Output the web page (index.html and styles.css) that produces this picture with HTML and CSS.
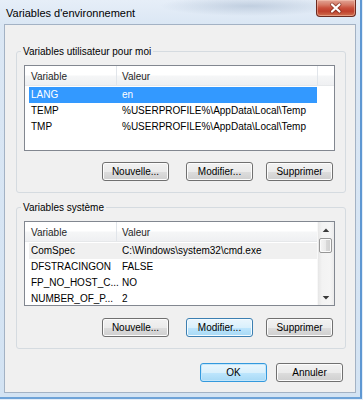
FILE: index.html
```html
<!DOCTYPE html>
<html lang="fr">
<head>
<meta charset="utf-8">
<title>Variables d'environnement</title>
<link rel="stylesheet" href="styles.css">
</head>
<body>
<div class="window">
  <header class="titlebar">
    <span class="title">Variables d'environnement</span>
    <span class="close">
      <svg width="38" height="15" viewBox="0 0 38 15">
        <path d="M15 3.5 L22.5 10.5 M22.5 3.5 L15 10.5" stroke="#6a2418" stroke-width="4" stroke-linecap="round" opacity="0.55"/>
        <path d="M15 3.5 L22.5 10.5 M22.5 3.5 L15 10.5" stroke="#ffffff" stroke-width="2.2" stroke-linecap="round"/>
      </svg>
    </span>
  </header>
  <main class="client">
    <fieldset class="group group-user">
      <legend>Variables utilisateur pour moi</legend>
      <div class="list list-user">
        <div class="list-main">
          <div class="lv-header">
            <div class="hcell hc1">Variable</div>
            <div class="hcell hc2 fixed">Valeur</div>
            <div class="hcell hc3"></div>
          </div>
          <div class="rows">
            <div class="row selected"><span class="c1">LANG</span><span class="c2">en</span></div>
            <div class="row"><span class="c1">TEMP</span><span class="c2">%USERPROFILE%\AppData\Local\Temp</span></div>
            <div class="row"><span class="c1">TMP</span><span class="c2">%USERPROFILE%\AppData\Local\Temp</span></div>
          </div>
        </div>
      </div>
      <div class="btn-row">
        <button class="btn btn-new">Nouvelle...</button>
        <button class="btn btn-edit">Modifier...</button>
        <button class="btn">Supprimer</button>
      </div>
    </fieldset>

    <fieldset class="group group-system">
      <legend>Variables système</legend>
      <div class="list list-system">
        <div class="list-main">
          <div class="lv-header">
            <div class="hcell hc1">Variable</div>
            <div class="hcell hc2">Valeur</div>
          </div>
          <div class="rows">
            <div class="row inactive"><span class="c1">ComSpec</span><span class="c2">C:\Windows\system32\cmd.exe</span></div>
            <div class="row"><span class="c1">DFSTRACINGON</span><span class="c2">FALSE</span></div>
            <div class="row"><span class="c1">FP_NO_HOST_C...</span><span class="c2">NO</span></div>
            <div class="row"><span class="c1">NUMBER_OF_P...</span><span class="c2">2</span></div>
          </div>
        </div>
        <div class="scrollbar">
          <div class="sb-arrow">
            <svg width="17" height="17" viewBox="0 0 17 17"><path d="M5 10 L8.5 6.5 L12 10 Z" fill="#3a3a3a"/></svg>
          </div>
          <div class="sb-thumb"></div>
          <div class="sb-track"></div>
          <div class="sb-arrow">
            <svg width="17" height="17" viewBox="0 0 17 17"><path d="M5 7 L8.5 10.5 L12 7 Z" fill="#3a3a3a"/></svg>
          </div>
        </div>
      </div>
      <div class="btn-row btn-row-sys">
        <button class="btn btn-new">Nouvelle...</button>
        <button class="btn btn-edit btn-hot">Modifier...</button>
        <button class="btn">Supprimer</button>
      </div>
    </fieldset>

    <div class="dialog-buttons">
      <button class="btn btn-hot btn-ok">OK</button>
      <button class="btn">Annuler</button>
    </div>
  </main>
</div>
</body>
</html>
```

FILE: styles.css
```css
* { box-sizing: border-box; }

body {
  margin: 0;
  width: 363px;
  height: 400px;
  overflow: hidden;
  background: #e3edf8;
  font-family: "Liberation Sans", Arial, sans-serif;
  font-size: 10px;
  color: #000;
}

.window {
  width: 362px;
  height: 399px;
  padding: 0 4px;
  display: flex;
  flex-direction: column;
  background:
    radial-gradient(ellipse 90px 10px at 250px 6px, rgba(150,170,195,0.45), rgba(150,170,195,0) 100%),
    linear-gradient(to bottom, #e6eef8 0, #dbe7f4 24px, #d3e3f3 100%);
  border-right: 2px solid #5e97d2;
  border-bottom: 2px solid #6ea3d8;
}

.titlebar {
  height: 24px;
  display: flex;
  align-items: flex-start;
  flex: none;
}

.title {
  font-size: 11px;
  line-height: 13px;
  margin-top: 7px;
  padding-left: 2px;
  color: #000;
}

.close {
  margin-left: auto;
  width: 40px;
  height: 17px;
  border: 1px solid #6b2a20;
  border-top: none;
  border-radius: 0 0 4px 4px;
  background: linear-gradient(to bottom, #e2a496 0%, #d67a66 30%, #c9503c 50%, #bf3f2c 70%, #d0704f 100%);
  box-shadow: inset 0 0 0 1px rgba(255,210,190,0.45);
  display: flex;
  align-items: center;
  justify-content: center;
}

.close svg { display: block; }

.client {
  height: 369px;
  flex: none;
  background: #f0f0f0;
  border: 1px solid #a3b2c4;
  padding: 0 0 0 11px;
  display: flex;
  flex-direction: column;
}

.group {
  width: 330px;
  margin: 0;
  padding: 7px 10px 11px 7px;
  border: 1px solid #d5dbe0;
  border-radius: 3px;
  min-width: 0;
}

.group-user { margin-top: 20px; }
.group-system { margin-top: 8px; }

.group legend {
  font-size: 10px;
  line-height: 13px;
  padding: 0 2px;
  margin-left: -3px;
  color: #000;
}

.list {
  display: flex;
  border: 1px solid #828790;
  background: #fff;
  width: 311px;
}

.list-user { height: 86px; }
.list-system { height: 85px; }

.list-main {
  flex: 1;
  min-width: 0;
}

.lv-header {
  display: flex;
  height: 20px;
  background: linear-gradient(to bottom, #ffffff 0%, #ffffff 45%, #f5f6f7 55%, #eff0f2 100%);
  border-bottom: 1px solid #e6e8ea;
}

.hcell {
  line-height: 19px;
  padding-top: 1px;
  color: #1f1f1f;
  white-space: nowrap;
}

.hc1 {
  width: 92px;
  padding-left: 6px;
  border-right: 1px solid #e1e5ea;
}

.hc2 {
  flex: 1;
  padding-left: 5px;
}

.hc2.fixed {
  flex: none;
  width: 201px;
  border-right: 1px solid #e1e5ea;
}

.hc3 { flex: 1; }

.rows {
  padding-top: 1px;
}

.row {
  display: flex;
  height: 16px;
  line-height: 16px;
  margin-left: 4px;
  width: 288px;
  white-space: nowrap;
}

.row .c1 {
  width: 91px;
  padding-left: 2px;
  overflow: hidden;
}

.row .c2 {
  flex: 1;
  padding-left: 2px;
  overflow: hidden;
}

.row.selected {
  background: #3399ff;
  color: #fff;
}

.row.inactive {
  background: #f0f0f0;
}

.scrollbar {
  width: 17px;
  flex: none;
  display: flex;
  flex-direction: column;
  background: linear-gradient(to right, #e6e6e6 0%, #f3f3f3 25%, #f5f5f5 75%, #ebebeb 100%);
  border-left: 1px solid #f8f8f8;
}

.sb-arrow {
  height: 16px;
  flex: none;
  display: flex;
  align-items: center;
  justify-content: center;
}

.sb-arrow svg { display: block; }

.sb-thumb {
  height: 15px;
  flex: none;
  margin-left: 1px;
  width: 13px;
  border: 1px solid #979797;
  border-radius: 2px;
  background: linear-gradient(to right, #f4f4f4 0%, #eaeaea 50%, #d9d9d9 51%, #d0d0d0 100%);
  box-shadow: inset 0 0 0 1px #fbfbfb;
}

.sb-track { flex: 1; }

.btn-row {
  display: flex;
  justify-content: flex-end;
  padding-right: 2px;
  margin-top: 11px;
}

.btn-row-sys { margin-top: 12px; }

.btn {
  width: 67px;
  height: 19px;
  padding: 0;
  margin: 0;
  font-family: "Liberation Sans", Arial, sans-serif;
  font-size: 10px;
  line-height: 17px;
  color: #000;
  text-align: center;
  border: 1px solid #707070;
  border-radius: 3px;
  background: linear-gradient(to bottom, #f2f2f2 0%, #ebebeb 50%, #dddddd 51%, #cfcfcf 100%);
  box-shadow: inset 0 0 0 1px #fcfcfc;
}

.btn-new { margin-right: 17px; }
.btn-edit { margin-right: 13px; }

.btn-hot {
  border-color: #3c7fb1;
  background: linear-gradient(to bottom, #eaf6fd 0%, #d9f0fc 50%, #bee6fd 51%, #a7d9f5 100%);
  box-shadow: inset 0 0 0 1px #f4fbff;
}

.dialog-buttons {
  display: flex;
  justify-content: flex-end;
  padding-right: 12px;
  margin-top: 14px;
}

.btn-ok {
  margin-right: 9px;
  border-color: #3399dd;
  box-shadow: inset 0 0 0 1px #c4e6fa;
}
```
